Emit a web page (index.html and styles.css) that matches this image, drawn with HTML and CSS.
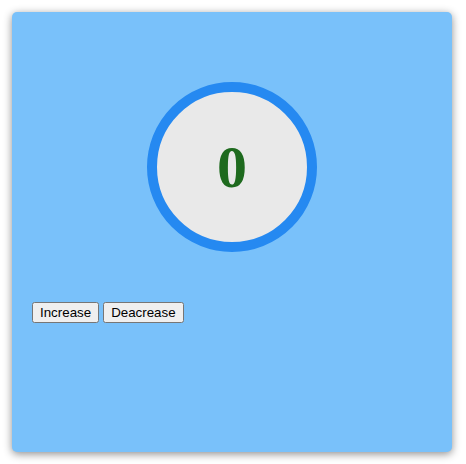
FILE: index.html
```html
<!DOCTYPE html>
<html>
<head>
<meta charset="utf-8">
<link rel="stylesheet" href="styles.css">
</head>
<body>
<div class="card">
  <div class="circle"><span class="count">0</span></div>
  <div class="controls">
    <button class="btn">Increase</button>
    <button class="btn">Deacrease</button>
  </div>
</div>
</body>
</html>
```
FILE: styles.css
```css
html, body { margin: 0; padding: 0; background: #fff; }
body { padding: 12px; }
.card {
  width: 440px;
  height: 440px;
  box-sizing: border-box;
  background: #79c1fa;
  border-radius: 5px;
  box-shadow: 0 2px 8px rgba(0,0,0,0.45);
  padding: 70px 20px 20px;
}
.circle {
  width: 170px;
  height: 170px;
  box-sizing: border-box;
  margin: 0 auto;
  border: 10px solid #2589f1;
  border-radius: 50%;
  background: #e9e9e9;
  display: flex;
  align-items: center;
  justify-content: center;
}
.count {
  font-family: "Liberation Serif", serif;
  font-weight: bold;
  font-size: 60px;
  color: #1e6a1e;
  line-height: 1;
}
.controls {
  margin-top: 50px;
  display: flex;
  gap: 4px;
}
.btn {
  font-family: "Liberation Sans", Arial, sans-serif;
  font-size: 13.33px;
  padding: 1px 6px;
  margin: 0;
}
```
